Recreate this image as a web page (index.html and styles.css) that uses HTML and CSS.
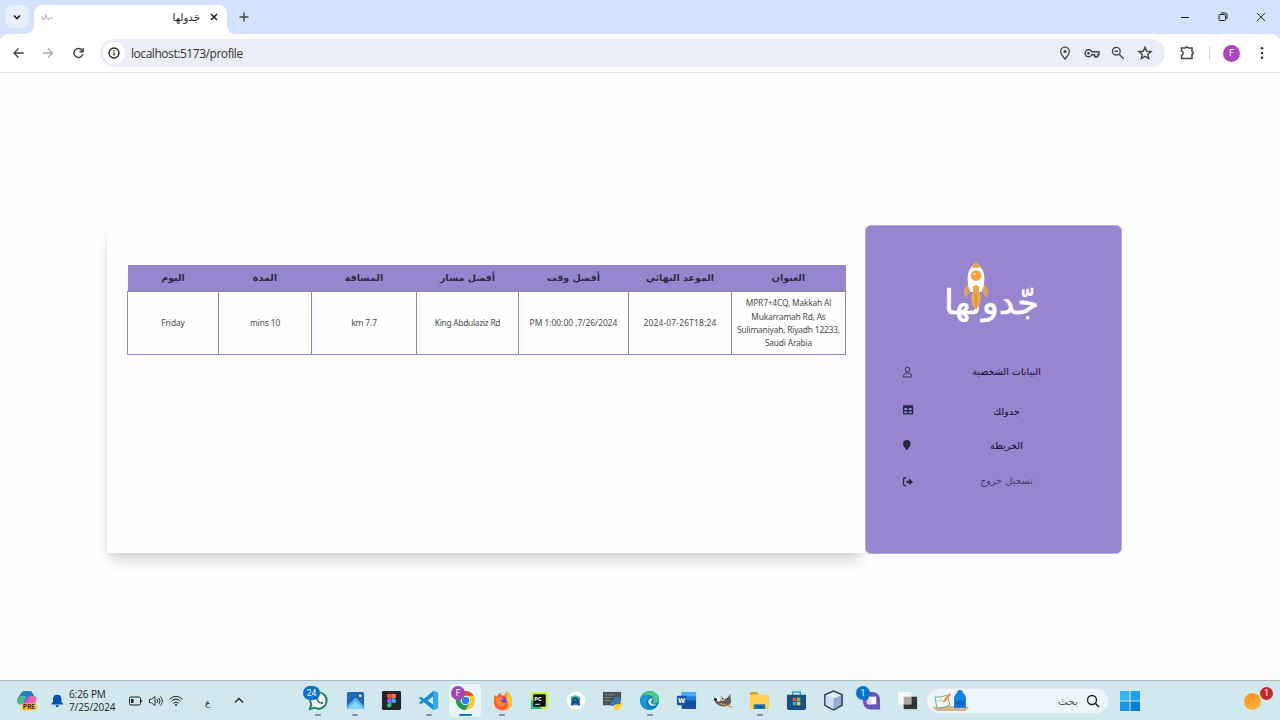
FILE: index.html
```html
<!DOCTYPE html>
<html lang="ar">
<head>
<meta charset="utf-8">
<title>جَدولها</title>
<link rel="stylesheet" href="styles.css">
</head>
<body>
<header class="titlebar">
  <div class="tab-search"><svg width="10" height="10" viewBox="0 0 10 10"><path class="ln dark" d="M2 3.5l3 3 3-3" stroke-width="1.7"/></svg></div>
  <div class="tab">
    <svg class="favicon" width="12" height="12" viewBox="0 0 12 12"><path d="M1 5v3h3l1-2 2 2 2-1h3M3 7l1 2M7 8l1 1" fill="none" stroke="#b6a7c5" stroke-width=".9"/><path d="M4 6l1-4 1 4z" fill="#dc9ba6"/></svg>
    <span class="tab-title" dir="rtl">جَدولها</span>
    <svg width="10" height="10" viewBox="0 0 10 10"><path class="ln dark" d="M2 2l6 6M8 2L2 8" stroke-width="1.6"/></svg>
  </div>
  <svg class="newtab" width="12" height="12" viewBox="0 0 12 12"><path class="ln" d="M6 1.5v9M1.5 6h9" stroke-width="1.4"/></svg>
  <div class="window-controls">
    <svg width="10" height="10" viewBox="0 0 10 10"><path class="ln dark" d="M1 5.5h8" stroke-width="1"/></svg>
    <svg width="10" height="10" viewBox="0 0 10 10"><path class="ln dark" d="M1 3.500q0-1 1-1h4q1.500 0 1.500 1v4q0 1-1 1H2q-1 0-1-1zM3 1h4.500q1.500 0 1.500 1.500V7" stroke-width="1"/></svg>
    <svg width="10" height="10" viewBox="0 0 10 10"><path class="ln dark" d="M1 1l8 8M9 1L1 9" stroke-width=".9"/></svg>
  </div>
</header>
<nav class="toolbar">
  <div class="nav-buttons">
    <svg width="14" height="14" viewBox="0 0 14 14"><path class="ln" d="M12.500 7H3M7.500 2.500L3 7l4.500 4.500" stroke-width="1.4"/></svg>
    <svg width="14" height="14" viewBox="0 0 14 14"><path class="ln pale" d="M2 7h9.500M7 2.500L11.500 7 7 11.500" stroke-width="1.3"/></svg>
    <svg width="14" height="14" viewBox="0 0 14 14"><path class="ln" d="M11.800 8A4.500 4.500 0 1 1 11 4.200L12 5.500M12.200 2v3.700H8.500" stroke-width="1.4"/></svg>
  </div>
  <div class="address">
    <div class="site-info"><svg width="14" height="14" viewBox="0 0 14 14"><circle class="ln dark" cx="7" cy="7" r="5" stroke-width="1.3"/><path class="ln dark" d="M7 6.500v3M7 4.100v1.100" stroke-width="1.4"/></svg></div>
    <span class="url">localhost:5173/profile</span>
    <div class="address-icons">
      <svg width="16" height="16" viewBox="0 0 16 16"><path class="ln" d="M8 14C5 10.600 3.700 8.700 3.700 6.500a4.300 4.300 0 0 1 8.600 0C12.300 8.700 11 10.600 8 14z" stroke-width="1.3"/><circle cx="8" cy="6.500" r="1.600" fill="#444"/></svg>
      <svg width="16" height="16" viewBox="0 0 16 16"><path class="ln" d="M7.700 6.700H15v3h-1.300v2h-3v-2h-3A3.500 3.500 0 1 1 7.700 6.700z" stroke-width="1.4"/><circle cx="4.500" cy="8.200" r="1.300" fill="#444"/></svg>
      <svg width="16" height="16" viewBox="0 0 16 16"><circle class="ln" cx="6.300" cy="6.300" r="3.900" stroke-width="1.3"/><path class="ln" d="M9.200 9.200l4.500 4.500M4.500 6.300h3.600" stroke-width="1.4"/></svg>
      <svg width="16" height="16" viewBox="0 0 16 16"><path class="ln" d="M8 2.300l1.700 4 4.300.3-3.300 2.800 1 4.200L8 11.300l-3.700 2.300 1-4.200L2 6.600l4.300-.3z" stroke-width="1.4"/></svg>
    </div>
  </div>
  <svg class="extension" width="16" height="16" viewBox="0 0 16 16"><path class="ln" d="M2.500 3h3.700C6.200 1.500 9.300 1.500 9.300 3H13v3.500c1.500 0 1.500 3 0 3V13.500H2.500v-3c2.200-.4 2.200-4 0-4.400z" stroke-width="1.5"/></svg>
  <i class="divider"></i>
  <span class="avatar">F</span>
  <svg class="kebab" width="6" height="16" viewBox="0 0 6 16"><g fill="#333"><circle cx="3" cy="3.300" r="1.250"/><circle cx="3" cy="8" r="1.250"/><circle cx="3" cy="12.700" r="1.250"/></g></svg>
</nav>

<main class="page">
  <section class="schedule">
    <table class="schedule-table">
      <colgroup><col class="c-day"><col class="c-duration"><col class="c-distance"><col class="c-route"><col class="c-time"><col class="c-deadline"><col class="c-address"></colgroup>
      <thead><tr><th>اليوم</th><th>المدة</th><th>المسافة</th><th>أفضل مسار</th><th>أفضل وقت</th><th>الموعد النهائي</th><th>العنوان</th></tr></thead>
      <tbody><tr><td>Friday</td><td>mins 10</td><td>km 7.7</td><td class="route">King Abdulaziz Rd</td><td class="time">PM 1:00:00 ,7/26/2024</td><td class="deadline">2024-07-26T18:24</td><td class="place">MPR7+4CQ, Makkah Al<br>Mukarramah Rd, As<br>Sulimaniyah, Riyadh 12233,<br>Saudi Arabia</td></tr></tbody>
    </table>
  </section>
  <aside class="sidebar">
    <svg class="logo" width="104" height="74" viewBox="0 0 104 74">
      <text class="logo-text" x="99" y="58" direction="rtl" textLength="95" lengthAdjust="spacingAndGlyphs">جّدولها</text>
      <path d="M28 28q-6 4-3 14l5-6zM44 28q6 4 3 14l-5-6z" fill="#dda065"/>
      <path d="M36 7q8.500 5 8.500 16 0 7-3 13h-11q-3-6-3-13Q27.500 12 36 7z" fill="#fff"/>
      <path d="M36 6q4 2 5 5-5 2-10 0 1-3 5-5z" fill="#e5a45b"/>
      <circle cx="36" cy="19.500" r="5.300" fill="#f3a43f"/><circle cx="34.500" cy="18" r="1" fill="#fff3d7"/>
      <path d="M33 31q3-4 6 0v6q5.500 6-3 17-8.500-11-3-17z" fill="#edaa4b"/><path d="M36 32v18" stroke="#ce9456" stroke-width="1.400"/>
    </svg>
    <ul class="menu">
      <li class="m1"><svg width="12" height="12" viewBox="0 0 12 12"><circle cx="5.500" cy="3.500" r="2.300" class="ln navy" stroke-width=".9"/><path class="ln navy" d="M1.300 11q0-4 4.200-4t4.200 4z" stroke-width=".9"/></svg><span dir="rtl">البيانات الشخصية</span></li>
      <li class="m2"><svg width="12" height="12" viewBox="0 0 12 12"><path fill="#242847" fill-rule="evenodd" d="M2 1.300h8.200q1 0 1 1V9.500q0 1-1 1H2q-1 0-1-1V2.300q0-1 1-1zM2.300 4v2h3V4zm4.500 0v2h3V4zM2.300 7.300v1.900h3V7.300zm4.500 0v1.900h3V7.300z"/></svg><span dir="rtl">جدولك</span></li>
      <li class="m3"><svg width="12" height="12" viewBox="0 0 12 12"><path fill="#242847" d="M4.800 11.500C2.700 8.700 1 6.700 1 4.800a3.800 3.800 0 0 1 7.600 0c0 1.900-1.700 3.900-3.800 6.700z"/></svg><span dir="rtl">الخريطة</span></li>
      <li class="m4"><svg width="12" height="12" viewBox="0 0 12 12"><path class="ln navy" d="M4.200 2H2.600Q1.500 2 1.500 3v5.500q0 1 1.100 1h1.600" stroke-width="1.300"/><path fill="#242847" d="M4.500 4.700H7V2.500l4.200 3.400L7 9.300V7.100H4.500z"/></svg><span dir="rtl">تسجيل خروج</span></li>
    </ul>
  </aside>
</main>

<footer class="taskbar">
  <div class="tray">
    <svg class="copilot" width="22" height="22" viewBox="0 0 22 22"><path d="M1.500 9L5 3q1-2 4-2h5q2 0 3 3l1 2h-5l-3 7-6 1q-4-1-2.500-5z" fill="#217fc0"/><path d="M1.500 10L5 6h5L7 14q-7 2-5.500-4z" fill="#55bd89"/><path d="M12 6h5q5 0 3 5l-2 6H8z" fill="#ed66a5"/><path d="M12 6h3l-4 9H7z" fill="#b45be5"/><rect x="5.500" y="13.500" width="15.500" height="7" rx="2" fill="#ffc32b"/><text class="pre" x="7" y="19.300">PRE</text></svg>
    <svg class="bell" width="14" height="16" viewBox="0 0 14 16"><path fill="#0752a8" d="M1.500 11.500H13v-1L11.400 9V6q0-4.300-4.200-4.300T3 6v3l-1.500 1.500zM5.500 12.300H9q-.3 2-1.800 2t-1.700-2z"/></svg>
    <div class="clock"><span>6:26 PM</span><span>7/25/2024</span></div>
    <svg class="battery" width="16" height="12" viewBox="0 0 16 12"><rect class="ln dark" x="1.500" y="2" width="11" height="8" rx="1.500"/><path d="M3 4h2.500v4H3zM13.300 4.500q2 1.500 0 3z" fill="#222"/></svg>
    <svg class="volume" width="16" height="12" viewBox="0 0 16 12"><path class="ln dark" d="M1.500 4.200h2L7 1.500v9L3.500 7.800h-2zM9 4q1.500 2 0 4M10.800 2.700q2.500 3.300 0 6.600M12.600 1.500q3.500 4.500 0 9" stroke-width=".9"/></svg>
    <svg class="wifi" width="16" height="12" viewBox="0 0 16 12"><path class="ln dark" d="M1.500 4.300q6.500-6 13 0M3.500 6.300q4.500-4.300 9 0M5.500 8.300q2.500-2.200 5 0"/><circle cx="8" cy="10" r="1" fill="#222"/></svg>
    <span class="input-lang">ع</span>
    <svg class="chevron" width="12" height="10" viewBox="0 0 12 10"><path class="ln dark" d="M2 6.500l4-4 4 4" stroke-width="1.300"/></svg>
  </div>
  <div class="apps">
    <div class="app running"><svg viewBox="0 0 22 22"><path d="M2 20l1.500-5a8.500 8.500 0 1 1 3.500 3.500z" fill="#f4fbf8" stroke="#21835b" stroke-width="2"/><path d="M8 7q0 6 7 8l1-2-2-1-1 1-3-3 1-1-1-2z" fill="#21835b"/></svg><b class="badge blue wide">24</b></div>
    <div class="app running"><svg viewBox="0 0 22 22"><rect x="2" y="2" width="18" height="18" rx="2" fill="#2667b2"/><path d="M2 17l8-8q1-1 2 0l8 8v1q0 2-2 2H4q-2 0-2-3z" fill="#55b9ef"/><path d="M3 19l8-7 8 7-1 1H4z" fill="#8bd5fb"/><circle cx="16" cy="6" r="1.400" fill="#fff"/></svg></div>
    <div class="app"><svg viewBox="0 0 22 22"><rect x="1" y="1" width="20" height="20" rx="1.500" fill="#25242a"/><path d="M11 4H8.500a2.400 2.400 0 0 0 0 4.800H11z" fill="#f24e1e"/><path d="M11 4h2.500a2.400 2.400 0 0 1 0 4.800H11z" fill="#ff7262"/><path d="M11 8.800H8.500a2.400 2.400 0 0 0 0 4.800H11z" fill="#a259ff"/><circle cx="13.400" cy="11.200" r="2.400" fill="#1abcfe"/><path d="M11 13.600H8.500a2.400 2.400 0 1 0 2.500 2.400z" fill="#0acf83"/></svg></div>
    <div class="app running"><svg viewBox="0 0 22 22"><path d="M16 1l5 2v16l-5 2L6 12.500 3 15l-2-1.500L4 11 1 8.500 3 7l3 2.500zm0 5.500L10 11l6 4.500z" fill="#168bd2" fill-rule="evenodd"/><path d="M16 1l5 2v16l-5 2z" fill="#35a9ec"/></svg></div>
    <div class="app active"><svg viewBox="0 0 22 22"><circle cx="11" cy="11" r="10" fill="#f7ca31"/><path d="M2.300 6a10 10 0 0 1 17.400 0H11L7 13.500z" fill="#e54a3b"/><path d="M2.300 6A10 10 0 0 0 11 21l4.500-8-8.500.5z" fill="#249a55"/><circle cx="11" cy="11" r="5" fill="#fff"/><circle cx="11" cy="11" r="3.900" fill="#2d7ee5"/></svg><b class="badge purple">F</b></div>
    <div class="app running"><svg viewBox="0 0 22 22"><path d="M3 5l2 2q2-4 5-4l-1 2 4 1 2-5q6 5 6 12a9.500 8.500 0 0 1-19 0q0-5 1-8z" fill="#ff623a"/><path d="M15 1q7 6 6 12-1 8-9 8 8-3 3-11z" fill="#ffc832"/><circle cx="10.500" cy="12" r="5" fill="#8745bd"/><path d="M4 9q5-3 8 0l-3 2q2 4 6 2-2 6-8 3-4-3-3-7z" fill="#ff8a2d"/></svg></div>
    <div class="app"><svg viewBox="0 0 22 22"><path d="M2 2h18v18H4l-2-4z" fill="#c8ef4b"/><path d="M2 10v10h12z" fill="#25bf79"/><rect x="4.500" y="4.500" width="13" height="13" fill="#111"/><text class="pc" x="5.500" y="11.800">PC</text><path d="M6.500 15h5" stroke="#fff"/></svg></div>
    <div class="app"><svg viewBox="0 0 22 22"><circle cx="11.500" cy="11" r="9.500" fill="#fff"/><path d="M6 8q4-4 10 0l-1 8H7z" fill="#397bdc"/><path d="M7 16l3-8h2l3 8M8 13h6" fill="none" stroke="#163d70" stroke-width="1.800"/><path d="M7 8q4-3 7 0" stroke="#35c585" stroke-width="2" fill="none"/></svg></div>
    <div class="app"><svg viewBox="0 0 22 22"><path d="M1 2h19v14H1z" fill="#4b5355"/><path d="M3 5h10M3 8h7M3 11h6" stroke="#769578"/><path d="M12 11V9q0-2 3.500-2T19 9v4.500q0 1-1.500 1H14q-2 0-2 2.500-3 0-3-3t3-3h3.500" fill="#347bb4"/><path d="M19 11q3 0 3 3.500T19 18h-3.500 3v1.500q0 2-3 2t-3-2V17q0-2 2-2H18q1.500 0 1.500-1.500z" fill="#ffd548"/></svg></div>
    <div class="app running"><svg viewBox="0 0 22 22"><circle cx="11" cy="11" r="10" fill="#087cc3"/><path d="M1.500 8q4-8 12.500-6.600 7 2 7 8.600-1 5-7 4 2-2 1-5-2-4-7-4-4 0-6.500 3z" fill="#4bcc86"/><path d="M1.500 8q6-5 10.500-1-6 3-4 9 2 4 7 4-5 2-10-1-5-4-3.500-11z" fill="#1c96d5"/><path d="M13 8.500q-4 1-3 5 2 5 9 2-8 0-6-4 2-1 0-3z" fill="#e3f4f7"/></svg></div>
    <div class="app"><svg viewBox="0 0 22 22"><rect x="6" y="2" width="15" height="18" rx="1" fill="#174f9c"/><path d="M6 2h15v5H6z" fill="#4baaf2"/><path d="M6 7h15v4H6z" fill="#277ddd"/><rect x="1" y="6" width="10" height="10" rx="1" fill="#1656aa"/><text class="word" x="2" y="14">W</text></svg></div>
    <div class="app"><svg viewBox="0 0 22 22"><path d="M2 9l5 1 2-4 3 3q3 1 6-5l1 9q-3 5-10 4-5-1-7-5z" fill="#665d56"/><circle cx="6" cy="10" r="2" fill="#fff"/><circle cx="10" cy="9" r="2.300" fill="#eee"/><circle cx="10" cy="9" r="1" fill="#111"/><circle cx="2.500" cy="10" r="1.500" fill="#111"/><path d="M7 14l13 4" stroke="#c59554" stroke-width="1.300"/></svg></div>
    <div class="app running"><svg viewBox="0 0 22 22"><path d="M1 4q0-2 2-2h5l3 3H1z" fill="#d89c1c"/><path d="M1 6q0-1 1-1h18q1 0 1 1v14H1z" fill="#ffd054"/><path d="M5 20v-4q0-1 1-1h10q1 0 1 1v4z" fill="#1878bd"/><path d="M8 17.500h6" stroke="#103d63"/></svg></div>
    <div class="app"><svg viewBox="0 0 22 22"><path d="M7 6V2h8v4" fill="none" stroke="#329ddd" stroke-width="1.500"/><path d="M1 5h20v13q0 3-3 3H4q-3 0-3-3z" fill="#184f7d"/><path d="M7 8h3.600v3.600H7z" fill="#f15b3b"/><path d="M11.400 8H15v3.600h-3.600z" fill="#8ac83e"/><path d="M7 12.400h3.600V16H7z" fill="#35a8ed"/><path d="M11.400 12.400H15V16h-3.600z" fill="#ffc83d"/></svg></div>
    <div class="app"><svg viewBox="0 0 22 22"><path d="M11 1l9 4v11l-9 5-9-5V5z" fill="#90adcf" stroke="#26364f" stroke-width="1.500"/><path d="M2.800 5.500L11 9v11l-8.200-4.500z" fill="#cedff3"/><path d="M11 2l8 3.500L11 9 3 5.500z" fill="#e9f3fc"/></svg></div>
    <div class="app"><svg viewBox="0 0 22 22"><path d="M12 2q9 0 9 9v9.500h-9q-9 0-9-9.500 0-9 9-9z" fill="#6754b8"/><path d="M9 7h8v8H9z" fill="#fff"/><path d="M7 10h5v5H7z" fill="#d9d1ff"/></svg><b class="badge blue">1</b></div>
    <div class="app"><svg viewBox="0 0 22 22"><path d="M7 7h14v13H7z" fill="#343434"/><path d="M1 2h14v13H1z" fill="#f8f8f6"/><path d="M7 7h8v8H7z" fill="#a7a7a7"/></svg></div>
  </div>
  <div class="search">
    <svg width="38" height="22" viewBox="0 0 38 22"><path d="M0 17q15-2 37 0l-3 4H5z" fill="#d5b58b"/><path d="M3 7q6 1 12-2l3 10q-6 3-13 3z" fill="#f8fff5" stroke="#6fa88b"/><path d="M6 12q3-4 4-1t4-2" fill="none" stroke="#89b89b"/><path d="M11 11l6-8 2 2-6 7z" fill="#ef9155"/><path d="M25 3q0-3 3-3t3 3q3 2 3 6v9H22V9q0-4 3-6z" fill="#1681e6"/><path d="M23.500 10.500h9v6h-9z" fill="#0b66ca"/></svg>
    <span dir="rtl">بحث</span>
    <svg width="14" height="14" viewBox="0 0 14 14"><circle class="ln dark" cx="6" cy="6" r="4.500" stroke-width="1.400"/><path class="ln dark" d="M9.300 9.300L13 13" stroke-width="1.600"/></svg>
  </div>
  <svg class="windows" width="20" height="20" viewBox="0 0 20 20"><path d="M0 0h9.500v9.500H0z" fill="#35b4f0"/><path d="M10.500 0H20v9.500h-9.500z" fill="#22a0e9"/><path d="M0 10.500h9.500V20H0z" fill="#1797e3"/><path d="M10.500 10.500H20V20h-9.500z" fill="#087bd3"/></svg>
  <div class="widget"><i></i><b>1</b></div>
</footer>
</body>
</html>
```
FILE: styles.css
```css
* { box-sizing: border-box; }
body { margin: 0; width: 1280px; height: 720px; overflow: hidden; display: flex; flex-direction: column; background: #fefefe; font-family: "Noto Sans", "DejaVu Sans", sans-serif; color: #222; }
svg { display: block; flex: none; overflow: visible; }
.ln { fill: none; stroke: #444; }
.ln.dark { stroke: #222; }
.ln.pale { stroke: #aaa; }
.ln.navy { stroke: #2e2b4d; }

.titlebar { height: 42px; flex: none; margin-bottom: -8px; background: #d3e2fd; display: flex; padding: 5px 0 8px 5px; }
.tab-search { width: 24px; height: 23px; border-radius: 8px; background: #e8f0fe; display: grid; place-items: center; margin-right: 5px; }
.tab { position: relative; width: 193px; height: 29px; border-radius: 8px 8px 0 0; background: #fff; display: flex; align-items: center; padding: 0 8px 5px 7px; }
.tab::before, .tab::after { content: ""; position: absolute; bottom: 0; width: 8px; height: 8px; }
.tab::before { left: -8px; background: radial-gradient(circle at 0 0, transparent 7.5px, #fff 8px); }
.tab::after { right: -8px; background: radial-gradient(circle at 100% 0, transparent 7.5px, #fff 8px); }
.tab-title { margin-left: auto; margin-right: 9px; font: 10.2px "DejaVu Sans", sans-serif; }
.newtab { margin: 6px 0 0 11px; }
.window-controls { margin-left: auto; display: flex; gap: 28px; padding: 7px 14px 0 0; }
.toolbar { height: 39px; flex: none; border-bottom: 1px solid #dfe0e2; border-radius: 8px 8px 0 0; background: #fff; display: flex; align-items: center; z-index: 1; }
.nav-buttons { display: flex; gap: 16px; padding-left: 11px; width: 100px; }
.address { width: 1065px; height: 28px; border-radius: 14px; background: #ebedf8; display: flex; align-items: center; padding: 0 12px 0 3px; }
.site-info { width: 22px; height: 22px; border-radius: 50%; background: #fff; display: grid; place-items: center; }
.url { margin-left: 6px; font: 12px "Open Sans", sans-serif; letter-spacing: -.45px; color: #333; }
.address-icons { margin-left: auto; display: flex; gap: 10.7px; }
.extension { margin-left: 14px; }
.divider { width: 1px; height: 14px; background: #cbd5e8; margin-left: 14px; }
.avatar { width: 17px; height: 17px; margin-left: 13px; border-radius: 50%; background: #ab47bc; color: #fff; font: 9px/17px Roboto, sans-serif; text-align: center; }
.kebab { margin-left: 19px; }

.page { flex: 1; padding: 152px 0 0 107px; display: flex; align-items: flex-start; }
.schedule { width: 758px; height: 328px; padding: 40px 20px 0; background: #fefefe; box-shadow: 0 11px 14px -4px rgba(0,0,0,.17), -2px 2px 5px -1px rgba(0,0,0,.04); }
.schedule-table { width: 719px; height: 90px; border-collapse: collapse; table-layout: fixed; font: 8.4px/13.2px "Noto Sans", sans-serif; color: #4c4c4c; }
.c-day { width: 91px; } .c-duration { width: 93px; } .c-distance { width: 105px; } .c-route { width: 102px; } .c-time { width: 110px; } .c-deadline { width: 103px; } .c-address { width: 114px; }
th, td { padding: 0; text-align: center; white-space: nowrap; }
th { height: 26px; background: #9686cf; color: #302b42; font: bold 9.5px/14px "DejaVu Sans", sans-serif; }
td { height: 63px; border: 1px solid #8f87b8; letter-spacing: -.1px; }
.route { letter-spacing: -.27px; }
.time { letter-spacing: .02px; }
.deadline { letter-spacing: .2px; }
.place { letter-spacing: -.18px; }
.sidebar { width: 257px; height: 329px; border: 1px solid #b5aadd; border-radius: 6px; background: #9786cf; display: flex; flex-direction: column; z-index: 1; }
.logo { margin: 30px 0 0 74px; }
.logo-text { font: 34px "DejaVu Sans", sans-serif; fill: #fff; stroke: #fff; stroke-width: .6px; }
.menu { list-style: none; margin: 26px 0 0; padding: 0 0 0 36px; font: 9.6px/16px "DejaVu Sans", sans-serif; color: #100d28; }
.menu li { display: grid; grid-template-columns: 12px 184px; height: 36px; align-items: center; }
.menu span { text-align: center; padding-left: 1px; }
.menu .m1 { height: 32px; }
.menu .m2 { height: 47px; }
.menu .m2 svg { margin-top: -3px; }
.menu .m3 { height: 22px; }
.menu .m3 svg { margin-top: -3px; }
.menu .m4 { height: 48px; color: #463b66; }
.menu .m4 svg { margin-top: 1px; }

.taskbar { height: 40px; flex: none; background: #d0e8ee; border-top: 1px solid #aab9be; display: flex; align-items: center; z-index: 2; }
.tray { width: 300px; display: flex; align-items: center; padding-left: 16px; }
.pre { font: bold 6.5px Roboto, sans-serif; fill: #352900; }
.bell { margin-left: 12px; }
.clock { width: 53px; margin-left: 5px; display: flex; flex-direction: column; font: 10px/13px "Open Sans", sans-serif; letter-spacing: -.1px; white-space: nowrap; }
.battery { margin-left: 6px; }
.volume { margin-left: 4px; }
.wifi { margin-left: 4px; }
.input-lang { font: 9px "DejaVu Sans", sans-serif; width: 8px; margin: 4px 0 0 21px; }
.chevron { margin-left: 20px; }
.apps { display: flex; width: 626px; height: 39px; }
.app { position: relative; width: 36.8px; height: 39px; display: grid; place-items: center; }
.app svg { width: 21px; height: 21px; z-index: 1; }
.pc { font: bold 6.5px "Liberation Mono", monospace; fill: #fff; }
.word { font: bold 8.5px Roboto, sans-serif; fill: #fff; }
.app.running::after, .app.active::after { content: ""; position: absolute; bottom: 4px; width: 6px; height: 2.5px; border-radius: 2px; background: #828e94; }
.app.active::before { content: ""; position: absolute; left: 2px; top: 3px; width: 32px; height: 33px; border-radius: 4px; background: #e8f5fa; }
.app.active::after { width: 13px; background: #1976c8; }
.badge { position: absolute; z-index: 2; left: 4px; top: 5px; width: 14px; height: 14px; border-radius: 8px; color: #fff; font: 8.5px/14px Roboto, sans-serif; text-align: center; }
.badge.wide { width: 17px; left: 3px; }
.blue { background: #0874c8; }
.purple { background: #a447b5; }
.search { width: 183px; height: 26px; border-radius: 13px; background: #edf6fa; border: 1px solid #dceaee; display: flex; align-items: center; padding: 0 8px 0 5px; }
.search span { margin-left: auto; margin-right: 8px; font: 10.5px "DejaVu Sans", sans-serif; color: #555; }
.windows { margin-left: 11px; }
.widget { position: relative; width: 29px; height: 30px; margin-left: 104px; }
.widget i { position: absolute; left: 0; top: 7px; width: 17px; height: 17px; border-radius: 50%; background: linear-gradient(145deg, #ff961f, #fba12c 50%, #ffb94e); }
.widget b { position: absolute; left: 16px; top: 1px; width: 13px; height: 13px; border-radius: 50%; background: #c62a27; color: #fff; font: 9px/13px Roboto, sans-serif; text-align: center; }
```
